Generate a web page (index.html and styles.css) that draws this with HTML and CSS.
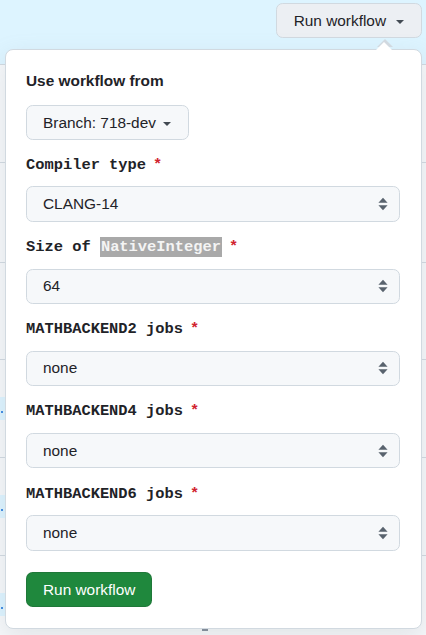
FILE: index.html
```html
<!DOCTYPE html>
<html lang="en">
<head>
<meta charset="utf-8">
<title>Run workflow</title>
<link rel="stylesheet" href="styles.css">
</head>
<body>
<div class="page">
  <header class="band">
    <button class="btn-run" type="button">Run workflow <span class="caret"></span></button>
  </header>
  <div class="row"></div>
  <div class="row"></div>
  <div class="row"></div>
  <div class="row"><span class="chip"><span class="dot"></span></span></div>
  <div class="row"><span class="chip"><span class="dot"></span></span></div>
  <div class="row"><span class="chip"><span class="dot"></span></span><span class="mark"></span></div>

  <div class="popup">
    <div class="title">Use workflow from</div>
    <button class="branch-btn" type="button">Branch: 718-dev <span class="caret"></span></button>

    <div class="field">
      <div class="field-label">Compiler type<span class="req">*</span></div>
      <div class="select"><span>CLANG-14</span>
        <svg class="updown" width="10" height="14" viewBox="0 0 10 14"><path d="M0.4 5.8 L5 0.8 L9.6 5.8 Z M0.4 8.2 L9.6 8.2 L5 13.2 Z" fill="#59636e"/></svg>
      </div>
    </div>

    <div class="field">
      <div class="field-label">Size of <span class="hl">NativeInteger</span><span class="req">*</span></div>
      <div class="select"><span>64</span>
        <svg class="updown" width="10" height="14" viewBox="0 0 10 14"><path d="M0.4 5.8 L5 0.8 L9.6 5.8 Z M0.4 8.2 L9.6 8.2 L5 13.2 Z" fill="#59636e"/></svg>
      </div>
    </div>

    <div class="field">
      <div class="field-label">MATHBACKEND2 jobs<span class="req">*</span></div>
      <div class="select"><span>none</span>
        <svg class="updown" width="10" height="14" viewBox="0 0 10 14"><path d="M0.4 5.8 L5 0.8 L9.6 5.8 Z M0.4 8.2 L9.6 8.2 L5 13.2 Z" fill="#59636e"/></svg>
      </div>
    </div>

    <div class="field">
      <div class="field-label">MATHBACKEND4 jobs<span class="req">*</span></div>
      <div class="select"><span>none</span>
        <svg class="updown" width="10" height="14" viewBox="0 0 10 14"><path d="M0.4 5.8 L5 0.8 L9.6 5.8 Z M0.4 8.2 L9.6 8.2 L5 13.2 Z" fill="#59636e"/></svg>
      </div>
    </div>

    <div class="field last">
      <div class="field-label">MATHBACKEND6 jobs<span class="req">*</span></div>
      <div class="select"><span>none</span>
        <svg class="updown" width="10" height="14" viewBox="0 0 10 14"><path d="M0.4 5.8 L5 0.8 L9.6 5.8 Z M0.4 8.2 L9.6 8.2 L5 13.2 Z" fill="#59636e"/></svg>
      </div>
    </div>

    <button class="btn-primary" type="button">Run workflow</button>
  </div>
</div>
</body>
</html>
```

FILE: styles.css
```css
* { box-sizing: border-box; }

html, body {
  margin: 0;
  padding: 0;
}

body {
  width: 426px;
  height: 635px;
  overflow: hidden;
  background: #f6f8fa;
  color: #1f2328;
  font-family: "Liberation Sans", Arial, sans-serif;
  font-size: 15.4px;
}

.page {
  position: relative;
  width: 426px;
  height: 635px;
  overflow: hidden;
}

.band {
  height: 65px;
  background: #ddf4ff;
  border-bottom: 1px solid #d1d9e0;
  display: flex;
  justify-content: flex-end;
  align-items: flex-start;
  padding: 3px 4px 0 0;
}

.btn-run {
  height: 35px;
  display: flex;
  align-items: center;
  gap: 10px;
  padding: 0 17px;
  border: 1px solid #d1d9e0;
  border-radius: 6.6px;
  background: #eceff3;
  color: #1f2328;
  font-family: "Liberation Sans", Arial, sans-serif;
  font-size: 15.4px;
  line-height: 22px;
}

.caret {
  display: inline-block;
  width: 0;
  height: 0;
  border-top: 4.4px solid #424a53;
  border-left: 4.4px solid transparent;
  border-right: 4.4px solid transparent;
  margin-top: 2px;
}

.row {
  height: 98px;
  border-bottom: 1px solid #d1d9e0;
  padding-top: 37px;
  display: flex;
  flex-direction: column;
  align-items: flex-start;
}

.row:nth-child(3) { height: 100px; }
.row:nth-child(4) { height: 97px; }

.chip {
  display: block;
  height: 23px;
  width: 40px;
  background: #ddf4ff;
  padding: 14px 0 0 1px;
}

.dot {
  display: block;
  width: 2px;
  height: 2px;
  border-radius: 1px;
  background: #0969da;
}

.mark {
  display: block;
  width: 6px;
  height: 2px;
  margin: 13px 0 0 202px;
  background: #818b98;
}

.popup {
  position: absolute;
  left: 5px;
  top: 49px;
  width: 417px;
  background: #ffffff;
  border: 1px solid #d1d9e0;
  border-radius: 8px;
  padding: 19px 21px 21px 20px;
  box-shadow: 0 8px 24px rgba(140, 149, 159, 0.2);
}

.popup::before {
  content: "";
  position: absolute;
  top: -18.6px;
  right: 28px;
  border: 8.8px solid transparent;
  border-bottom-color: #d1d9e0;
}

.popup::after {
  content: "";
  position: absolute;
  top: -16px;
  right: 28.8px;
  border: 8px solid transparent;
  border-bottom-color: #ffffff;
}

.title {
  font-weight: bold;
  font-size: 15.4px;
  line-height: 23px;
  margin: 0 0 13px;
}

.branch-btn {
  height: 35px;
  display: flex;
  align-items: center;
  gap: 7px;
  padding: 0 17px 0 16px;
  border: 1px solid #d1d9e0;
  border-radius: 6.6px;
  background: #f6f8fa;
  color: #1f2328;
  font-family: "Liberation Sans", Arial, sans-serif;
  font-size: 15.4px;
  line-height: 22px;
  margin-bottom: 13.6px;
}

.field {
  margin-bottom: 14.3px;
}

.field.last {
  margin-bottom: 21.5px;
}

.field-label {
  font-family: "Liberation Mono", "Courier New", monospace;
  font-weight: bold;
  font-size: 15.4px;
  line-height: 23px;
  margin-bottom: 9.7px;
  white-space: pre;
}

.req {
  color: #d1242f;
  margin-left: 7px;
}

.hl {
  background: #a9a9a9;
  color: #f4f4f4;
  padding: 1px 1px;
}

.select {
  height: 35.3px;
  display: flex;
  align-items: center;
  justify-content: space-between;
  padding: 0 11px 0 16px;
  border: 1px solid #d1d9e0;
  border-radius: 6.6px;
  background: #f6f8fa;
  font-size: 15.4px;
  line-height: 22px;
  color: #1f2328;
}

.updown {
  display: block;
}

.btn-primary {
  height: 35px;
  display: flex;
  align-items: center;
  padding: 0 16px;
  border: 1px solid rgba(31, 35, 40, 0.15);
  border-radius: 6.6px;
  background: #1f883d;
  color: #ffffff;
  font-family: "Liberation Sans", Arial, sans-serif;
  font-size: 15.4px;
  line-height: 22px;
}
```
